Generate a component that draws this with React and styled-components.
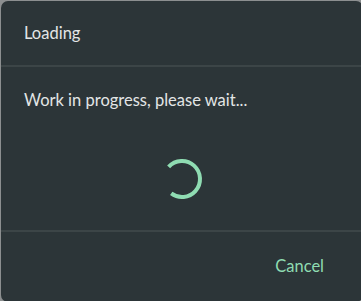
import React from "react";
import styled, { createGlobalStyle } from "styled-components";

const Global = createGlobalStyle`
  html, body {
    margin: 0;
    padding: 0;
    background: #8c8f90;
  }
  body {
    font-family: Lato, "Noto Sans", sans-serif;
  }
`;

const Dialog = styled.div`
  box-sizing: border-box;
  width: 362px;
  height: 301px;
  margin: 1px 0 0 1px;
  background: #2c3538;
  border-radius: 7px;
  display: flex;
  flex-direction: column;
  color: #e3e6e6;
  overflow: hidden;
`;

const Header = styled.div`
  box-sizing: border-box;
  height: 66px;
  display: flex;
  align-items: center;
  padding: 0 23px 1px;
  font-size: 16.5px;
  border-bottom: 2px solid #3c4547;
`;

const Body = styled.div`
  flex: 1;
  display: flex;
  flex-direction: column;
  padding: 22px 23px 0;
  font-size: 16.5px;
`;

const Message = styled.div`
  line-height: 22px;
`;

const SpinnerWrap = styled.div`
  display: flex;
  justify-content: center;
  margin-top: 46px;
`;

const Footer = styled.div`
  box-sizing: border-box;
  height: 72px;
  border-top: 2px solid #3c4547;
  display: flex;
  align-items: center;
  justify-content: flex-end;
  padding: 0 29px 2px 0;
`;

const TextButton = styled.button`
  background: none;
  border: none;
  font-family: inherit;
  font-size: 16.5px;
  color: #8fdcb2;
  padding: 6px 10px;
  cursor: pointer;
`;

function Spinner() {
  const r = 18;
  const c = 2 * Math.PI * r;
  return (
    <svg width="44" height="44" viewBox="0 0 44 44">
      <circle
        cx="22"
        cy="22"
        r={r}
        fill="none"
        stroke="#8fdcb2"
        strokeWidth="4"
        strokeDasharray={`${c * 0.73} ${c}`}
        transform="rotate(-138 22 22)"
      />
    </svg>
  );
}

export default function App() {
  return (
    <>
      <Global />
      <Dialog>
        <Header>Loading</Header>
        <Body>
          <Message>Work in progress, please wait...</Message>
          <SpinnerWrap>
            <Spinner />
          </SpinnerWrap>
        </Body>
        <Footer>
          <TextButton>Cancel</TextButton>
        </Footer>
      </Dialog>
    </>
  );
}
